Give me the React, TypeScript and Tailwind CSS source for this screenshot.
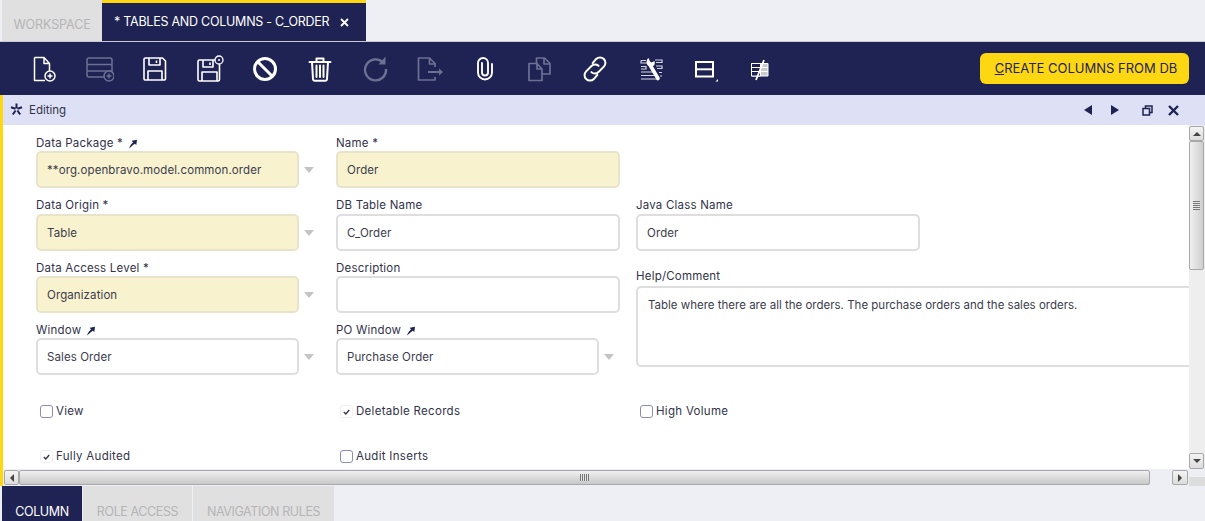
import React from "react";

const white = "#ffffff";
const dim = "#6d7092";

function Plus({ cx, cy, r, c }: { cx: number; cy: number; r: number; c: string }) {
  return (
    <g>
      <circle cx={cx} cy={cy} r={r} fill="#1f2353" stroke={c} strokeWidth="1.5" />
      <path d={`M${cx - 2.5} ${cy}h5M${cx} ${cy - 2.5}v5`} stroke={c} strokeWidth="1.5" />
    </g>
  );
}

const icons: { c: string; draw: (c: string) => React.ReactNode }[] = [
  {
    c: white,
    draw: (c) => (
      <g fill="none" stroke={c} strokeWidth="1.5" strokeLinejoin="round">
        <path d="M3.5 2.5h9.5l5.5 6v8M13 2.5v6h5.5M14 25.5H3.5v-23" />
        <Plus cx={19} cy={21} r={5} c={c} />
      </g>
    ),
  },
  {
    c: dim,
    draw: (c) => (
      <g fill="none" stroke={c} strokeWidth="1.5">
        <rect x="1" y="3" width="25" height="19" rx="2" />
        <path d="M1 9.5h25M1 16h25" />
        <Plus cx={23} cy={21} r={5} c={c} />
      </g>
    ),
  },
  {
    c: white,
    draw: (c) => (
      <g fill="none" stroke={c} strokeWidth="1.6" strokeLinejoin="round">
        <path d="M4.5 3h17l3 3v17.5a1.5 1.5 0 0 1-1.5 1.5H4.500a1.500 1.500 0 0 1-1.500-1.500V4.500A1.500 1.500 0 0 1 4.500 3z" />
        <path d="M8 3v7h11V3M7 25v-9h14v9M15.500 5.500v2.500" />
      </g>
    ),
  },
  {
    c: white,
    draw: (c) => (
      <g fill="none" stroke={c} strokeWidth="1.6" strokeLinejoin="round">
        <path d="M3.500 5h17l3 3v16.500a1.500 1.500 0 0 1-1.500 1.500H3.500A1.500 1.500 0 0 1 2 24.500V6.500A1.500 1.500 0 0 1 3.500 5z" />
        <path d="M7 5v7h10V5M6 26v-9h15v9M14 7.500v2.500" />
        <circle cx="23" cy="5" r="4" fill="#1f2353" strokeWidth="1.300" />
        <circle cx="23" cy="5" r="1" fill={c} stroke="none" />
      </g>
    ),
  },
  {
    c: white,
    draw: (c) => (
      <g fill="none" stroke={c} strokeWidth="3">
        <circle cx="14" cy="14" r="10.500" />
        <path d="M7 7l14 14" />
      </g>
    ),
  },
  {
    c: white,
    draw: (c) => (
      <g fill="none" stroke={c} strokeWidth="2" strokeLinejoin="round" strokeLinecap="round">
        <path d="M3.500 7h21M10.500 7V3.500h7V7M6 7l1 17a2 2 0 0 0 2 1.800h10a2 2 0 0 0 2-1.800l1-17M10.500 10.500v11.500M14 10.500v11.500M17.500 10.500v11.500" />
      </g>
    ),
  },
  {
    c: dim,
    draw: (c) => (
      <g fill="none" stroke={c} strokeWidth="2.400">
        <path d="M22 7.500A10.500 10.500 0 1 0 25 14" />
        <path d="M24.500 1.500v8h-7z" fill={c} stroke="none" />
      </g>
    ),
  },
  {
    c: dim,
    draw: (c) => (
      <g fill="none" stroke={c} strokeWidth="1.700" strokeLinejoin="round">
        <path d="M19 12V8.500L13.500 3H2.500v22H19v-3M13.500 3v6H19" />
        <path d="M12 17h14" strokeWidth="2" />
        <path d="M23 13.500l4 3.500-4 3.500z" fill={c} stroke="none" />
      </g>
    ),
  },
  {
    c: white,
    draw: (c) => (
      <path
        d="M21 9v8.500a7 7 0 0 1-14 0V8a5 5 0 0 1 10 0v9.500a3 3 0 0 1-6 0V8"
        fill="none"
        stroke={c}
        strokeWidth="1.900"
        strokeLinecap="round"
      />
    ),
  },
  {
    c: dim,
    draw: (c) => (
      <g fill="none" stroke={c} strokeWidth="1.700" strokeLinejoin="round">
        <path d="M10.500 8V3h8l5.500 5.500V19h-8" />
        <path d="M18 3v6h6" />
        <path d="M3 8.500h8l5 5.500v11.500H3zM11 8.500V14h5" />
      </g>
    ),
  },
  {
    c: white,
    draw: (c) => (
      <g fill="none" stroke={c} strokeWidth="1.700" strokeLinecap="round" transform="translate(14 14) scale(1.18) translate(-14 -14)">
        <path d="M12 9l3-3.500a4.500 4.500 0 0 1 6.500 6.500l-4.500 4.500a4.500 4.500 0 0 1-6 .2" />
        <path d="M16 19l-3 3.500a4.500 4.500 0 0 1-6.500-6.500l4.500-4.500a4.500 4.500 0 0 1 6-.2" />
      </g>
    ),
  },
  {
    c: white,
    draw: (c) => (
      <g fill="none">
        <path d="M5 5.500h5M19 5h7v2.500h-6M5 5.500V8h6M5 11.500h5v2.500H5M20 11h6v2.500h-5M5 17h14M5 20.500h15M5 24h16M23 17.500h3M24 21h2" stroke="#d4d5e2" strokeWidth="1.200" />
        <path d="M13.500 9l8.500 14.500" stroke={c} strokeWidth="3.600" strokeLinecap="round" />
        <path d="M12.500 3c-2.500 2-2.500 5.500-.5 7.500 2 1.500 4 1.500 6 0 1-1.500 1-3 .5-4.500l-3 1.500-1.500-1z" fill={c} />
      </g>
    ),
  },
  {
    c: white,
    draw: (c) => (
      <g fill="none" stroke={c}>
        <rect x="5" y="7" width="17" height="14.500" strokeWidth="2" />
        <path d="M5 14.300h17" strokeWidth="2" />
        <path d="M27 24v2.500h-2.500z" fill={c} stroke="none" />
      </g>
    ),
  },
  {
    c: white,
    draw: (c) => (
      <g fill="none" strokeWidth="1">
        <path d="M5.500 8.500h16.500v12.500H5.500z" fill="#c9c9d2" stroke={c} />
        <path d="M5.500 8.500h9v12.500h-9z" fill="#1f2353" stroke={c} />
        <path d="M5.500 12.500h16.500M5.500 16.500h16.500" stroke={c} />
        <path d="M10 25l8-20" stroke={c} strokeWidth="1.800" />
      </g>
    ),
  },
];

function ToolbarIcon({ index }: { index: number }) {
  const ic = icons[index];
  return (
    <div className="flex w-[55px] items-center justify-center">
      <svg width="28" height="28" viewBox="0 0 28 28">
        {ic.draw(ic.c)}
      </svg>
    </div>
  );
}

function Pin() {
  return (
    <svg width="10" height="10" viewBox="0 0 10 10" className="ml-[5px] inline-block">
      <path d="M1 9.500C2 6.500 3.500 4.500 5 3.500L3.800 1.800 9 .8 8.300 6 6.800 4.800C5 6 3 8 1 9.500z" fill="#1f2353" />
    </svg>
  );
}

function Label({ text, pin, className }: { text: string; pin?: boolean; className?: string }) {
  return (
    <div className={`flex h-[15px] items-center whitespace-nowrap text-[11.5px] tracking-[0.2px] text-[#33334a] ${className ?? ""}`}>
      {text}
      {pin && <Pin />}
    </div>
  );
}

function Box({ value, required, className }: { value?: string; required?: boolean; className?: string }) {
  return (
    <div
      className={`flex h-[37px] items-center rounded-[5px] border-2 px-[9px] pt-[2px] text-[11.5px] tracking-[0.1px] text-[#3c3c4c] ${
        required ? "border-[#e8e4cb] bg-[#f9f2cf]" : "border-[#dedede] bg-white"
      } ${className ?? ""}`}
    >
      {value}
    </div>
  );
}

function Combo({ value, required }: { value: string; required?: boolean }) {
  return (
    <div className="flex items-center">
      <Box value={value} required={required} className="w-[263px]" />
      <div className="ml-[5px] h-0 w-0 border-x-[5px] border-t-[6px] border-x-transparent border-t-[#c4c4c4]" />
    </div>
  );
}

function Check({ label, checked }: { label: string; checked?: boolean }) {
  return (
    <div className="flex items-center pl-[4px]">
      {checked ? (
        <div className="flex h-[13px] w-[13px] shrink-0 items-center justify-center rounded-[3px] border border-[#efeff3] bg-white">
          <svg width="7" height="6" viewBox="0 0 7 6">
            <path d="M.8 3l2 2L6.200 1" fill="none" stroke="#33334a" strokeWidth="1.300" />
          </svg>
        </div>
      ) : (
        <div className="-mt-[1px] h-[13px] w-[13px] shrink-0 rounded-[3px] border-[1.5px] border-[#8a8db8] bg-white" />
      )}
      <span className="ml-[3px] text-[11.5px] tracking-[0.3px] text-[#33334a]">{label}</span>
    </div>
  );
}

function ScrollButton({ dir, className }: { dir: "up" | "down" | "left" | "right"; className?: string }) {
  const arrow =
    dir === "up"
      ? "border-x-[4px] border-b-[4px] border-x-transparent border-b-[#444]"
      : dir === "down"
        ? "border-x-[4px] border-t-[4px] border-x-transparent border-t-[#444]"
        : dir === "left"
          ? "border-y-[4px] border-r-[4px] border-y-transparent border-r-[#444]"
          : "border-y-[4px] border-l-[4px] border-y-transparent border-l-[#444]";
  return (
    <div className={`flex shrink-0 items-center justify-center rounded-[2px] border border-[#a8a8a8] bg-gradient-to-b from-[#f4f4f4] to-[#dcdcdc] ${className ?? ""}`}>
      <div className={`h-0 w-0 ${arrow}`} />
    </div>
  );
}

function Grip() {
  return <div className="h-[9px] w-[7px] bg-[repeating-linear-gradient(to_bottom,#777_0,#777_1px,#e4e4e4_1px,#e4e4e4_2px)]" />;
}

export default function App() {
  return (
    <div className="flex h-[521px] w-[1205px] flex-col overflow-hidden bg-[#eeeff5] font-['Inter','Liberation_Sans',sans-serif]">
      {/* Window tabs */}
      <div className="flex h-[42px] shrink-0 border-b border-[#c9c9cf] pl-[2px]">
        <div className="flex w-[100px] items-center justify-center bg-[#e0e0e0] pt-[9px] text-[12.5px] tracking-[-0.1px] text-[#b5b5b5]">WORKSPACE</div>
        <div className="flex w-[264px] items-center border-t-[3px] border-[#fdd711] bg-[#1f2353] pl-[12px] pt-[1px] text-[12.5px] text-white">
          <span className="whitespace-nowrap tracking-[-0.25px]">* TABLES AND COLUMNS - C_ORDER</span>
          <svg width="9" height="9" viewBox="0 0 9 9" className="ml-[11px]">
            <path d="M1 1l7 7M8 1L1 8" stroke="#fff" strokeWidth="1.800" />
          </svg>
        </div>
      </div>

      {/* Toolbar */}
      <div className="flex h-[53px] shrink-0 items-center bg-[#1f2353] pl-[17px] pr-[16px]">
        {icons.map((_, i) => (
          <ToolbarIcon key={i} index={i} />
        ))}
        <button className="ml-auto h-[31px] w-[209px] rounded-[6px] bg-[#fdd711] pl-[3px] text-[13px] text-[#1f2353]">
          <span className="underline">C</span>REATE COLUMNS FROM DB
        </button>
      </div>

      {/* Status bar */}
      <div className="flex h-[30px] shrink-0 items-center border-l-[3px] border-[#fdd711] bg-[#dee0f6] pl-[7px]">
        <svg width="13" height="13" viewBox="0 0 13 13" className="-mt-[2px]">
          <path d="M6.500 .5v5M1 4.200l4.500 1.600M12 4.200L7.500 5.800M2.800 11.500l2.800-4M10.200 11.500L7.400 7.500" stroke="#1f2353" strokeWidth="2" />
        </svg>
        <span className="ml-[6px] pt-[2px] text-[11.5px] text-[#33334a]">Editing</span>
        <div className="ml-auto flex items-center pr-[26px]">
          <div className="h-0 w-0 border-y-[5px] border-r-[8px] border-y-transparent border-r-[#1f2353]" />
          <div className="ml-[19px] h-0 w-0 border-y-[5px] border-l-[8px] border-y-transparent border-l-[#1f2353]" />
          <svg width="11" height="11" viewBox="0 0 11 11" className="ml-[23px]">
            <path d="M1 3.500h6.500V10H1zM3.500 3.500V1H10v6.500H7.500" fill="none" stroke="#1f2353" strokeWidth="1.500" />
          </svg>
          <svg width="11" height="11" viewBox="0 0 11 11" className="ml-[15px]">
            <path d="M1 1l9 9M10 1l-9 9" stroke="#1f2353" strokeWidth="2.400" />
          </svg>
        </div>
      </div>

      {/* Form */}
      <div className="flex h-[361px] shrink-0 flex-col border-l-[3px] border-[#fdd711] bg-white">
        <div className="flex h-[344px] shrink-0">
          <div className="min-w-0 flex-1 overflow-hidden pl-[33px] pt-[11px]">
            <div className="grid grid-cols-[300px_300px_1fr]">
              <div>
                <Label text="Data Package *" pin />
                <Combo value="**org.openbravo.model.common.order" required />
              </div>
              <div>
                <Label text="Name *" />
                <Box value="Order" required className="w-[284px]" />
              </div>
              <div />

              <div className="mt-[10px]">
                <Label text="Data Origin *" className="h-[16px]" />
                <Combo value="Table" required />
              </div>
              <div className="mt-[10px]">
                <Label text="DB Table Name" className="h-[16px]" />
                <Box value="C_Order" className="w-[284px]" />
              </div>
              <div className="mt-[10px]">
                <Label text="Java Class Name" className="h-[16px]" />
                <Box value="Order" className="w-[284px]" />
              </div>

              <div className="mt-[10px]">
                <Label text="Data Access Level *" />
                <Combo value="Organization" required />
              </div>
              <div className="mt-[10px]">
                <Label text="Description" />
                <Box className="w-[284px]" />
              </div>
              <div className="row-span-2 mt-[16px]">
                <Label text="Help/Comment" className="h-[19px]" />
                <div className="h-[81px] rounded-l-[5px] border-y-2 border-l-2 border-[#dedede] px-[10px] pt-[9px] text-[11.5px] text-[#3c3c4c]">
                  Table where there are all the orders. The purchase orders and the sales orders.
                </div>
              </div>

              <div className="mt-[10px]">
                <Label text="Window" pin />
                <Combo value="Sales Order" />
              </div>
              <div className="mt-[10px]">
                <Label text="PO Window" pin />
                <Combo value="Purchase Order" />
              </div>
            </div>

            <div className="mt-[28px] grid grid-cols-[300px_300px_1fr]">
              <Check label="View" />
              <Check label="Deletable Records" checked />
              <Check label="High Volume" />
            </div>
            <div className="mt-[28px] grid grid-cols-[300px_300px_1fr]">
              <Check label="Fully Audited" checked />
              <Check label="Audit Inserts" />
            </div>
          </div>

          {/* Vertical scrollbar */}
          <div className="flex w-[16px] shrink-0 flex-col bg-[#eeeeee] pt-[1px]">
            <ScrollButton dir="up" className="h-[15px] w-[15px]" />
            <div className="flex h-[129px] w-[15px] items-center justify-center rounded-[2px] border border-[#a8a8a8] bg-gradient-to-r from-[#f0f0f0] to-[#cfcfcf]">
              <Grip />
            </div>
            <ScrollButton dir="down" className="mt-auto h-[16px] w-[15px]" />
          </div>
        </div>

        {/* Horizontal scrollbar */}
        <div className="flex h-[17px] shrink-0 bg-[#eeeff5] pt-[1px]">
          <ScrollButton dir="left" className="ml-[1px] h-[15px] w-[15px]" />
          <div className="flex h-[15px] w-[1131px] items-center justify-center rounded-[2px] border border-[#a8a8a8] bg-gradient-to-b from-[#f0f0f0] to-[#c8c8c8]">
            <div className="h-[7px] w-[9px] bg-[repeating-linear-gradient(to_right,#777_0,#777_1px,#e4e4e4_1px,#e4e4e4_2px)]" />
          </div>
          <ScrollButton dir="right" className="ml-[22px] h-[15px] w-[16px]" />
          <div className="ml-[1px] mt-[7px] h-[9px] w-[16px] bg-[#dddddd]" />
        </div>
      </div>

      {/* Child tabs */}
      <div className="flex h-[35px] shrink-0 gap-[1px] pl-[2px] text-[12.5px] leading-[16px] tracking-[-0.4px]">
        <div className="flex w-[80px] items-end justify-center bg-[#1f2353] pb-[1px] text-white">COLUMN</div>
        <div className="flex w-[109px] items-end justify-center bg-[#e0e0e0] pb-[1px] text-[#b5b5b5]">ROLE ACCESS</div>
        <div className="flex w-[141px] items-end justify-center bg-[#e0e0e0] pb-[1px] text-[#b5b5b5]">NAVIGATION RULES</div>
      </div>
    </div>
  );
}
